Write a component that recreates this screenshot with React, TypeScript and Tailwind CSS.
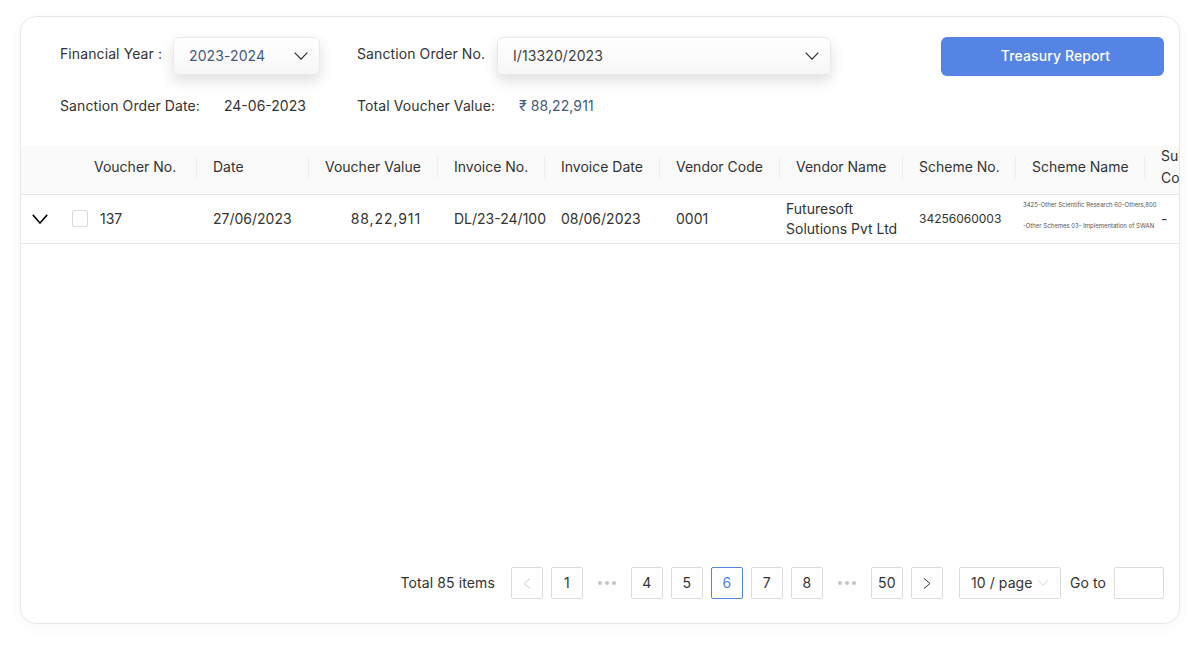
import React from 'react'

const Chevron = ({ className, width = 1.2 }: { className: string; width?: number }) => (
  <svg className={className} viewBox="0 0 14 8" preserveAspectRatio="none" fill="none" stroke="currentColor" strokeWidth={width}>
    <path d="M0.7 0.7L7 7.2l6.3-6.5" />
  </svg>
)

const Select = ({ value, width, color }: { value: string; width: string; color: string }) => (
  <div className={`flex h-[38px] items-center justify-between rounded-md border border-[#e9e9ec] bg-gradient-to-b from-white to-[#f7f7f7] pl-[15px] pr-[11px] text-sm shadow-[0_6px_14px_rgba(0,0,0,0.13)] ${width} ${color}`}>
    <span>{value}</span>
    <Chevron className="h-2 w-[14px] text-[#333]" />
  </div>
)

const headers = ['Voucher No.', 'Date', 'Voucher Value', 'Invoice No.', 'Invoice Date', 'Vendor Code', 'Vendor Name', 'Scheme No.', 'Scheme Name']

const PageBox = ({ children, active, muted }: { children?: React.ReactNode; active?: boolean; muted?: boolean }) => (
  <div className={`flex h-8 w-8 items-center justify-center rounded-[2px] border text-sm ${active ? 'border-[#5584e5] text-[#5584e5]' : 'border-[#dcdcdc]'} ${muted ? 'text-[#c8c8c8]' : ''}`}>
    {children}
  </div>
)

const Dots = () => (
  <div className="flex h-8 w-8 items-center justify-center gap-[3px]">
    <span className="h-1 w-1 rounded-full bg-[#c4c4c4]" />
    <span className="h-1 w-1 rounded-full bg-[#c4c4c4]" />
    <span className="h-1 w-1 rounded-full bg-[#c4c4c4]" />
  </div>
)

const Arrow = ({ d }: { d: string }) => (
  <svg className="h-[11px] w-2" viewBox="0 0 8 11" fill="none" stroke="currentColor" strokeWidth="1">
    <path d={d} />
  </svg>
)

const App = () => {
  return (
    <div className="h-[648px] w-[1200px] overflow-hidden bg-white px-5 pt-4 font-['Inter',sans-serif] text-sm tracking-[0.1px] text-[#333]">
      <div className="flex h-[608px] w-[1160px] flex-col overflow-hidden rounded-2xl border border-[#e6e6e9] bg-white shadow-[0_4px_16px_rgba(0,0,0,0.03)]">
        <div className="flex h-[129px] shrink-0 flex-col pl-[39px] pr-[15px] pt-5">
          <div className="flex items-start">
            <span className="mt-2 w-[113px] leading-[18px]">Financial Year :</span>
            <Select value="2023-2024" width="w-[147px]" color="text-[#475a7a]" />
            <span className="ml-[37px] mt-2 w-[140px] leading-[18px]">Sanction Order No.</span>
            <Select value="I/13320/2023" width="w-[334px]" color="text-[#3f3f46]" />
            <button className="ml-auto h-[39px] w-[223px] rounded-md bg-[#5584e5] pb-[2px] pl-[6px] text-sm font-medium text-white">Treasury Report</button>
          </div>
          <div className="mt-[21px] flex leading-[18px]">
            <span className="w-[164px]">Sanction Order Date:</span>
            <span className="w-[133px] tracking-normal">24-06-2023</span>
            <span className="w-[162px]">Total Voucher Value:</span>
            <span className="text-[#475a7a]">₹ 88,22,911</span>
          </div>
        </div>

        <div className="overflow-hidden">
          <table className="w-[1180px] table-fixed border-collapse text-left tracking-normal">
            <colgroup>
              <col className="w-[57px]" />
              <col className="w-[119px]" />
              <col className="w-[112px]" />
              <col className="w-[129px]" />
              <col className="w-[107px]" />
              <col className="w-[115px]" />
              <col className="w-[120px]" />
              <col className="w-[123px]" />
              <col className="w-[113px]" />
              <col className="w-[129px]" />
              <col className="w-[56px]" />
            </colgroup>
            <thead>
              <tr className="h-[48px] border-b border-[#e8e8e8] bg-[#fafafa]">
                <th />
                {headers.map((h) => (
                  <th key={h} className="p-0 pb-[5px] font-normal">
                    <div className="flex h-[22px] items-center border-r border-[#ededed] pl-4">
                      <span className="whitespace-nowrap">{h}</span>
                    </div>
                  </th>
                ))}
                <th className="p-0 pb-[3px] pl-4 text-left font-normal leading-[22px]">
                  <div className="-mt-[2px]">Sub Code</div>
                </th>
              </tr>
            </thead>
            <tbody>
              <tr className="h-[49px] border-b border-[#e8e8e8]">
                <td colSpan={2} className="p-0">
                  <div className="flex items-center pl-[11px]">
                    <Chevron className="h-[10px] w-4 text-black" width={1.3} />
                    <span className="ml-6 h-[17px] w-4 rounded-[2px] border-[1.5px] border-[#d9d9d9] bg-white" />
                    <span className="ml-3">137</span>
                  </div>
                </td>
                <td className="p-0 pl-4">27/06/2023</td>
                <td className="p-0 pr-[17px] text-right tracking-[0.9px]">88,22,911</td>
                <td className="whitespace-nowrap p-0 pl-4">DL/23-24/100</td>
                <td className="p-0 pl-4">08/06/2023</td>
                <td className="p-0 pl-4">0001</td>
                <td className="p-0 pl-[6px] leading-5">Futuresoft Solutions Pvt Ltd</td>
                <td className="p-0 pl-4 text-xs">34256060003</td>
                <td className="p-0 pl-[7px] align-top text-[6px] text-[#555]">
                  <div className="whitespace-nowrap leading-[19px]">3425-Other Scientific Research 60-Others,800</div>
                  <div className="mt-[1px] whitespace-nowrap leading-[21px]">-Other Schemes 03- Implementation of SWAN</div>
                </td>
                <td className="p-0 pl-4">-</td>
              </tr>
            </tbody>
          </table>
        </div>

        <div className="mt-auto flex items-center justify-end gap-2 pb-6 pr-[15px]">
          <span className="mr-2">Total 85 items</span>
          <PageBox muted><Arrow d="M7 0.5L1 5.5l6 5" /></PageBox>
          <PageBox>1</PageBox>
          <Dots />
          <PageBox>4</PageBox>
          <PageBox>5</PageBox>
          <PageBox active>6</PageBox>
          <PageBox>7</PageBox>
          <PageBox>8</PageBox>
          <Dots />
          <PageBox>50</PageBox>
          <PageBox><Arrow d="M1 0.5l6 5-6 5" /></PageBox>
          <div className="ml-2 flex h-8 w-[102px] items-center justify-between rounded-[2px] border border-[#dcdcdc] pl-[11px] pr-3">
            <span>10 / page</span>
            <Chevron className="h-[6px] w-[10px] text-[#c8c8c8]" width={1} />
          </div>
          <span className="ml-[1px]">Go to</span>
          <div className="h-8 w-[50px] rounded-[2px] border border-[#dcdcdc]" />
        </div>
      </div>
    </div>
  )
}

export default App
